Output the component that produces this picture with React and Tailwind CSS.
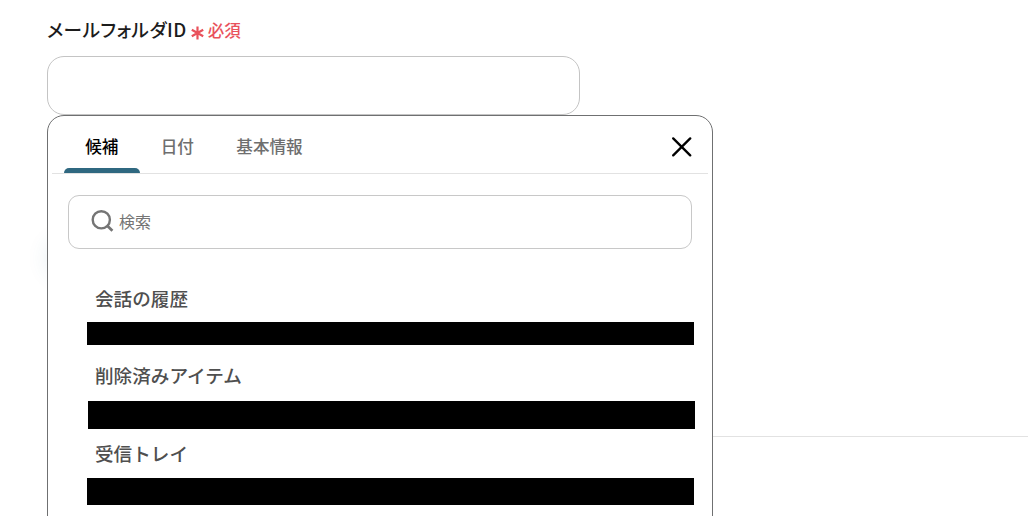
import React, { useState } from 'react';

const tabs = ['候補', '日付', '基本情報'];

const folders = [
  { name: '会話の履歴', mask: 'mt-[12px] ml-[39px] h-[23px]', row: 'pt-[36px]' },
  { name: '削除済みアイテム', mask: 'mt-[14px] ml-[40px] h-[28px]', row: 'pt-[17px]' },
  { name: '受信トレイ', mask: 'mt-[13px] ml-[39px] h-[27px]', row: 'pt-[11px]' },
];

function SuggestPanel() {
  const [active, setActive] = useState('候補');

  return (
    <div className="absolute left-[47px] top-[115px] h-[440px] w-[666px] rounded-t-[17px] border border-[#6f7071] bg-white">
      {/* Tabs */}
      <div className="mx-1 flex h-[58px] items-stretch border-b border-[#e2e2e2] pl-3">
        {tabs.map((tab) => (
          <button
            key={tab}
            type="button"
            onClick={() => setActive(tab)}
            className={`relative px-[21.2px] pt-[2px] text-[16.6px] leading-[24px] font-medium ${
              active === tab ? 'text-black' : 'text-[#6e6e6e]'
            }`}
          >
            {tab}
            {active === tab && (
              <span className="absolute inset-x-0 bottom-0 h-[5px] rounded-t-[5px] bg-[#2f6880]" />
            )}
          </button>
        ))}
        <button type="button" aria-label="閉じる" className="mr-4 ml-auto pt-[4px]">
          <svg className="block h-5 w-5" viewBox="0 0 20 20" fill="none" stroke="#000" strokeWidth="2.3" strokeLinecap="round">
            <path d="M1.2 1.4l17 17M18.2 1.4l-17 17" />
          </svg>
        </button>
      </div>

      {/* Search */}
      <div className="mx-5 mt-[21px] flex h-[54px] items-center rounded-[11px] border border-[#c8c8c8] pl-[22px]">
        <svg className="mb-[3px] block h-6 w-6" viewBox="0 0 24 24" fill="none" stroke="#757575" strokeWidth="2.4">
          <circle cx="10.3" cy="10.8" r="8.6" />
          <path d="M16 16.5l5.4 5.3" strokeWidth="2.7" />
        </svg>
        <input
          type="text"
          placeholder="検索"
          className="mb-[2px] ml-1 w-[500px] text-[16px] leading-6 outline-none placeholder:text-[#757575]"
        />
      </div>

      {/* Folder list */}
      {folders.map((folder) => (
        <div key={folder.name} className={folder.row}>
          <p className="pl-[47px] text-[18.6px] leading-[25px] font-medium text-[#4f4f4f]">{folder.name}</p>
          <div className={`w-[607px] bg-black ${folder.mask}`} />
        </div>
      ))}
    </div>
  );
}

export default function App() {
  return (
    <div className="relative flex h-[516px] w-[1028px] flex-col overflow-hidden bg-white font-['Noto_Sans_CJK_JP',sans-serif]">
      <div className="px-[47px] pt-[17px]">
        <label htmlFor="folder" className="flex h-[27px] items-center text-[18.6px] font-medium text-[#1c1c1c]">
          <span className="-mt-[3px] tracking-[0.5px] [font-feature-settings:'palt']">メールフォルダID</span>
          <svg className="mt-[5px] ml-[4px] block h-[14px] w-[13px]" viewBox="0 0 13 14" stroke="#e9525c" strokeWidth="2.2">
            <path d="M6.5 .5v13M.8 3.8l11.4 6.4M12.2 3.8L.8 10.2" />
          </svg>
          <span className="ml-[4px] text-[16.5px] font-medium text-[#e9525c]">必須</span>
        </label>
        <input
          id="folder"
          type="text"
          className="mt-3 block h-[59px] w-[533px] rounded-[17px] border border-[#c4c4c4] px-4 outline-none"
        />
      </div>
      <div className="mt-[125px] ml-[47px] h-[36px] w-[110px] rounded-full shadow-[0_0_22px_rgba(47,104,128,0.12)]" />
      <hr className="mt-[160px] ml-[47px] border-[#e2e2e2]" />
      <SuggestPanel />
    </div>
  );
}
